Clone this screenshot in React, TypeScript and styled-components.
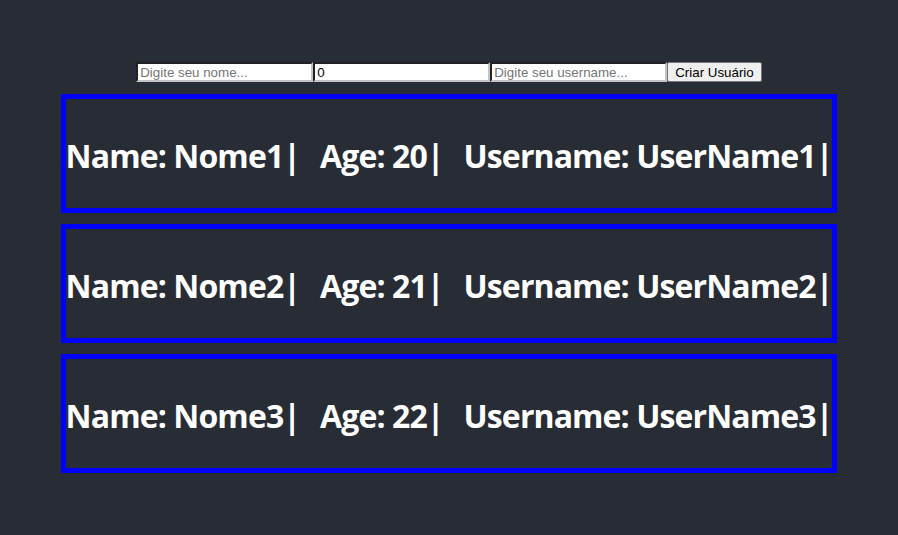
import React from "react";
import { styled, createGlobalStyle } from "styled-components";

interface User {
  name: string;
  age: number;
  username: string;
}

const users: User[] = [
  { name: "Nome1", age: 20, username: "UserName1" },
  { name: "Nome2", age: 21, username: "UserName2" },
  { name: "Nome3", age: 22, username: "UserName3" },
];

const GlobalStyle = createGlobalStyle`
  body {
    margin: 0;
    background: #282c34;
  }
`;

const Page = styled.div`
  min-height: 100vh;
  display: flex;
  flex-direction: column;
  align-items: center;
  padding-top: 62px;
  box-sizing: border-box;
`;

const Form = styled.form`
  display: flex;
  margin-bottom: 12px;
`;

const Input = styled.input`
  width: 177px;
  height: 20px;
  box-sizing: border-box;
  padding: 1px 2px;
  border: 2px inset #767676;
  border-color: #767676 #c4c4c4 #c4c4c4 #767676;
  background: #fff;
  font-family: "Liberation Sans", Arial, sans-serif;
  font-size: 13.33px;
  color: #000;
  margin: 0;

  &::placeholder {
    color: #757575;
  }
`;

const Button = styled.button`
  height: 20px;
  box-sizing: border-box;
  padding: 1px 7px;
  margin: 0;
  background: #efefef;
  border: 1px solid #767676;
  border-radius: 2px;
  font-family: "Liberation Sans", Arial, sans-serif;
  font-size: 13.33px;
  color: #000;
`;

const List = styled.div`
  display: flex;
  flex-direction: column;
  gap: 11px;
`;

const Card = styled.div`
  border: 5px solid #0000ff;
  height: 119px;
  box-sizing: border-box;
  display: flex;
  align-items: center;
  padding-top: 4px;
`;

const Line = styled.h1`
  margin: 0;
  display: flex;
  gap: 20px;
  font-family: "Open Sans", "Noto Sans", sans-serif;
  font-weight: 700;
  font-size: 32px;
  letter-spacing: -0.9px;
  color: #fff;
  white-space: pre;
`;

const App: React.FC = () => {
  return (
    <>
      <GlobalStyle />
      <Page>
        <Form onSubmit={(e) => e.preventDefault()}>
          <Input type="text" placeholder="Digite seu nome..." />
          <Input type="number" defaultValue={0} />
          <Input type="text" placeholder="Digite seu username..." />
          <Button type="submit">Criar Usuário</Button>
        </Form>
        <List>
          {users.map((u) => (
            <Card key={u.username}>
              <Line>
                <span>Name: {u.name}|</span>
                <span>Age: {u.age}|</span>
                <span>Username: {u.username}|</span>
              </Line>
            </Card>
          ))}
        </List>
      </Page>
    </>
  );
};

export default App;
